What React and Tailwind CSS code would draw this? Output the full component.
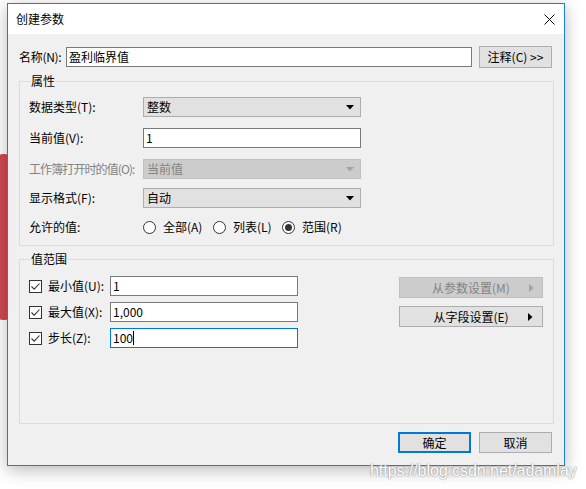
import { useState } from "react";

const FONT = "font-['Microsoft_YaHei_UI','Noto_Sans_CJK_SC',sans-serif]";

// Small down-pointing arrow used by the combo boxes
const DropArrow = ({ disabled }) => (
  <svg width="8" height="5" viewBox="0 0 8 5">
    <polygon points="0,0 8,0 4,4.5" fill={disabled ? "#a3a3a3" : "#000"} />
  </svg>
);

// Right-pointing arrow used on the menu buttons
const SideArrow = ({ disabled }) => (
  <svg width="5" height="8" viewBox="0 0 5 8">
    <polygon points="0,0 4.5,4 0,8" fill={disabled ? "#a3a3a3" : "#000"} />
  </svg>
);

const Select = ({ value, disabled }) => (
  <div
    className={
      disabled
        ? "w-[218px] h-[20px] flex items-center justify-between pl-[3px] pr-[6px] bg-[#cccccc] border border-[#bfbfbf] text-[#838383]"
        : "w-[218px] h-[20px] flex items-center justify-between pl-[3px] pr-[6px] bg-[#e1e1e1] border border-[#adadad] text-black"
    }
  >
    <span>{value}</span>
    <DropArrow disabled={disabled} />
  </div>
);

const TextBox = ({ value, width, focused }) => (
  <div
    className={
      focused
        ? "h-[20px] flex items-center pl-[2px] bg-white border border-[#0078d7]"
        : "h-[20px] flex items-center pl-[2px] bg-white border border-[#7a7a7a]"
    }
    style={{ width }}
  >
    <span>{value}</span>
    {focused && <span className="w-px h-[14px] bg-black" />}
  </div>
);

const Checkbox = ({ checked }) => (
  <div className="w-[13px] h-[13px] border border-[#333] bg-white flex items-center justify-center shrink-0">
    {checked && (
      <svg width="11" height="11" viewBox="0 0 11 11">
        <path d="M1.5 5.5 L4.2 8.2 L9.5 2.5" fill="none" stroke="#333" strokeWidth="1.1" />
      </svg>
    )}
  </div>
);

const Radio = ({ checked, label, onClick, className = "" }) => (
  <button onClick={onClick} className={`flex items-center gap-[7px] ${className}`}>
    <span className="w-[13px] h-[13px] rounded-full border border-[#333] bg-white flex items-center justify-center shrink-0">
      {checked && <span className="w-[7px] h-[7px] rounded-full bg-[#333]" />}
    </span>
    <span className="whitespace-nowrap">{label}</span>
  </button>
);

const Button = ({ children, primary, className = "" }) => (
  <button
    className={
      primary
        ? `w-[73px] h-[21px] bg-[#e1e1e1] border-2 border-[#0078d7] flex items-center justify-center ${className}`
        : `w-[73px] h-[21px] bg-[#e1e1e1] border border-[#adadad] flex items-center justify-center ${className}`
    }
  >
    {children}
  </button>
);

const GroupBox = ({ title, children, className = "" }) => (
  <div className={`relative ml-[11px] w-[535px] h-[165px] border border-[#dcdcdc] ${className}`}>
    <span className="absolute -top-[9px] left-[10px] px-px bg-[#f0f0f0] leading-[16px]">{title}</span>
    {children}
  </div>
);

export default function App() {
  const [allowed, setAllowed] = useState("range");

  return (
    <div className={`relative w-[586px] h-[489px] overflow-hidden bg-white text-[12px] leading-[16px] text-black ${FONT}`}>
      {/* red shape sitting behind the dialog */}
      <div className="absolute -left-[6px] top-[154px] w-[20px] h-[166px] rounded-[9px] bg-[#d34a51]" />

      <div className="relative pt-[3px] pl-[7px]">
        <div className="w-[558px] h-[463px] border border-[#1c7fd6] bg-[#f0f0f0] flex flex-col shadow-[0_4px_16px_rgba(0,0,0,0.28)]">
          {/* Title bar */}
          <div className="h-[30px] bg-white flex items-center justify-between pl-[8px] pr-[9px]">
            <span>创建参数</span>
            <svg width="11" height="11" viewBox="0 0 11 11">
              <path d="M0.5 0.5 L10.5 10.5 M10.5 0.5 L0.5 10.5" stroke="#000" strokeWidth="1" />
            </svg>
          </div>

          {/* Name */}
          <div className="mt-[12px] h-[22px] flex items-center pl-[11px]">
            <span className="w-[47px] whitespace-nowrap tracking-[-0.3px]">名称(N):</span>
            <TextBox value="盈利临界值" width={406} />
            <Button className="ml-[7px] h-[22px]">注释(C) &gt;&gt;</Button>
          </div>

          {/* Properties */}
          <GroupBox title="属性" className="mt-[13px]">
            <div className="flex flex-col pt-[15px] pl-[9px]">
              <div className="flex items-center h-[20px]">
                <span className="w-[114px]">数据类型(T):</span>
                <Select value="整数" />
              </div>
              <div className="flex items-center h-[20px] mt-[11px]">
                <span className="w-[114px]">当前值(V):</span>
                <TextBox value="1" width={218} />
              </div>
              <div className="flex items-center h-[20px] mt-[11px] text-[#838383]">
                <span className="w-[114px] whitespace-nowrap tracking-[-0.9px]">工作簿打开时的值(O):</span>
                <Select value="当前值" disabled />
              </div>
              <div className="flex items-center h-[20px] mt-[9px]">
                <span className="w-[114px]">显示格式(F):</span>
                <Select value="自动" />
              </div>
              <div className="flex items-center h-[20px] mt-[9px]">
                <span className="w-[114px]">允许的值:</span>
                <div className="flex items-center">
                  <Radio className="w-[70px]" label="全部(A)" checked={allowed === "all"} onClick={() => setAllowed("all")} />
                  <Radio className="w-[69px]" label="列表(L)" checked={allowed === "list"} onClick={() => setAllowed("list")} />
                  <Radio label="范围(R)" checked={allowed === "range"} onClick={() => setAllowed("range")} />
                </div>
              </div>
            </div>
          </GroupBox>

          {/* Range of values */}
          <GroupBox title="值范围" className="mt-[13px]">
            <div className="flex pt-[16px] pl-[9px] pr-[10px]">
              <div className="flex flex-col gap-[6px]">
                {[
                  { label: "最小值(U):", value: "1" },
                  { label: "最大值(X):", value: "1,000" },
                  { label: "步长(Z):", value: "100", focused: true },
                ].map(({ label, value, focused }) => (
                  <div key={label} className="flex items-center h-[20px]">
                    <Checkbox checked />
                    <span className="ml-[6px] w-[62px] whitespace-nowrap">{label}</span>
                    <TextBox value={value} width={188} focused={focused} />
                  </div>
                ))}
              </div>
              <div className="ml-auto mt-[1px] flex flex-col gap-[8px]">
                <div className="w-[144px] h-[21px] bg-[#cccccc] border border-[#bfbfbf] text-[#838383] flex items-center justify-center relative">
                  <span>从参数设置(M)</span>
                  <span className="absolute right-[8px] top-[6px]">
                    <SideArrow disabled />
                  </span>
                </div>
                <div className="w-[144px] h-[21px] bg-[#e1e1e1] border border-[#adadad] flex items-center justify-center relative">
                  <span>从字段设置(E)</span>
                  <span className="absolute right-[9px] top-[6px]">
                    <SideArrow />
                  </span>
                </div>
              </div>
            </div>
          </GroupBox>

          {/* OK / Cancel */}
          <div className="mt-[8px] flex justify-end gap-[8px] pr-[12px]">
            <Button primary>确定</Button>
            <Button>取消</Button>
          </div>
        </div>
      </div>

      {/* blog watermark */}
      <span className="absolute left-[370px] top-[461px] text-[16px] leading-[20px] tracking-[-0.05px] whitespace-nowrap text-white font-['Liberation_Sans',Arial,sans-serif] [text-shadow:0_0_1px_#8a8a8a,0_0_2px_#9a9a9a]">
        https://blog.csdn.net/adamlay
      </span>
    </div>
  );
}
